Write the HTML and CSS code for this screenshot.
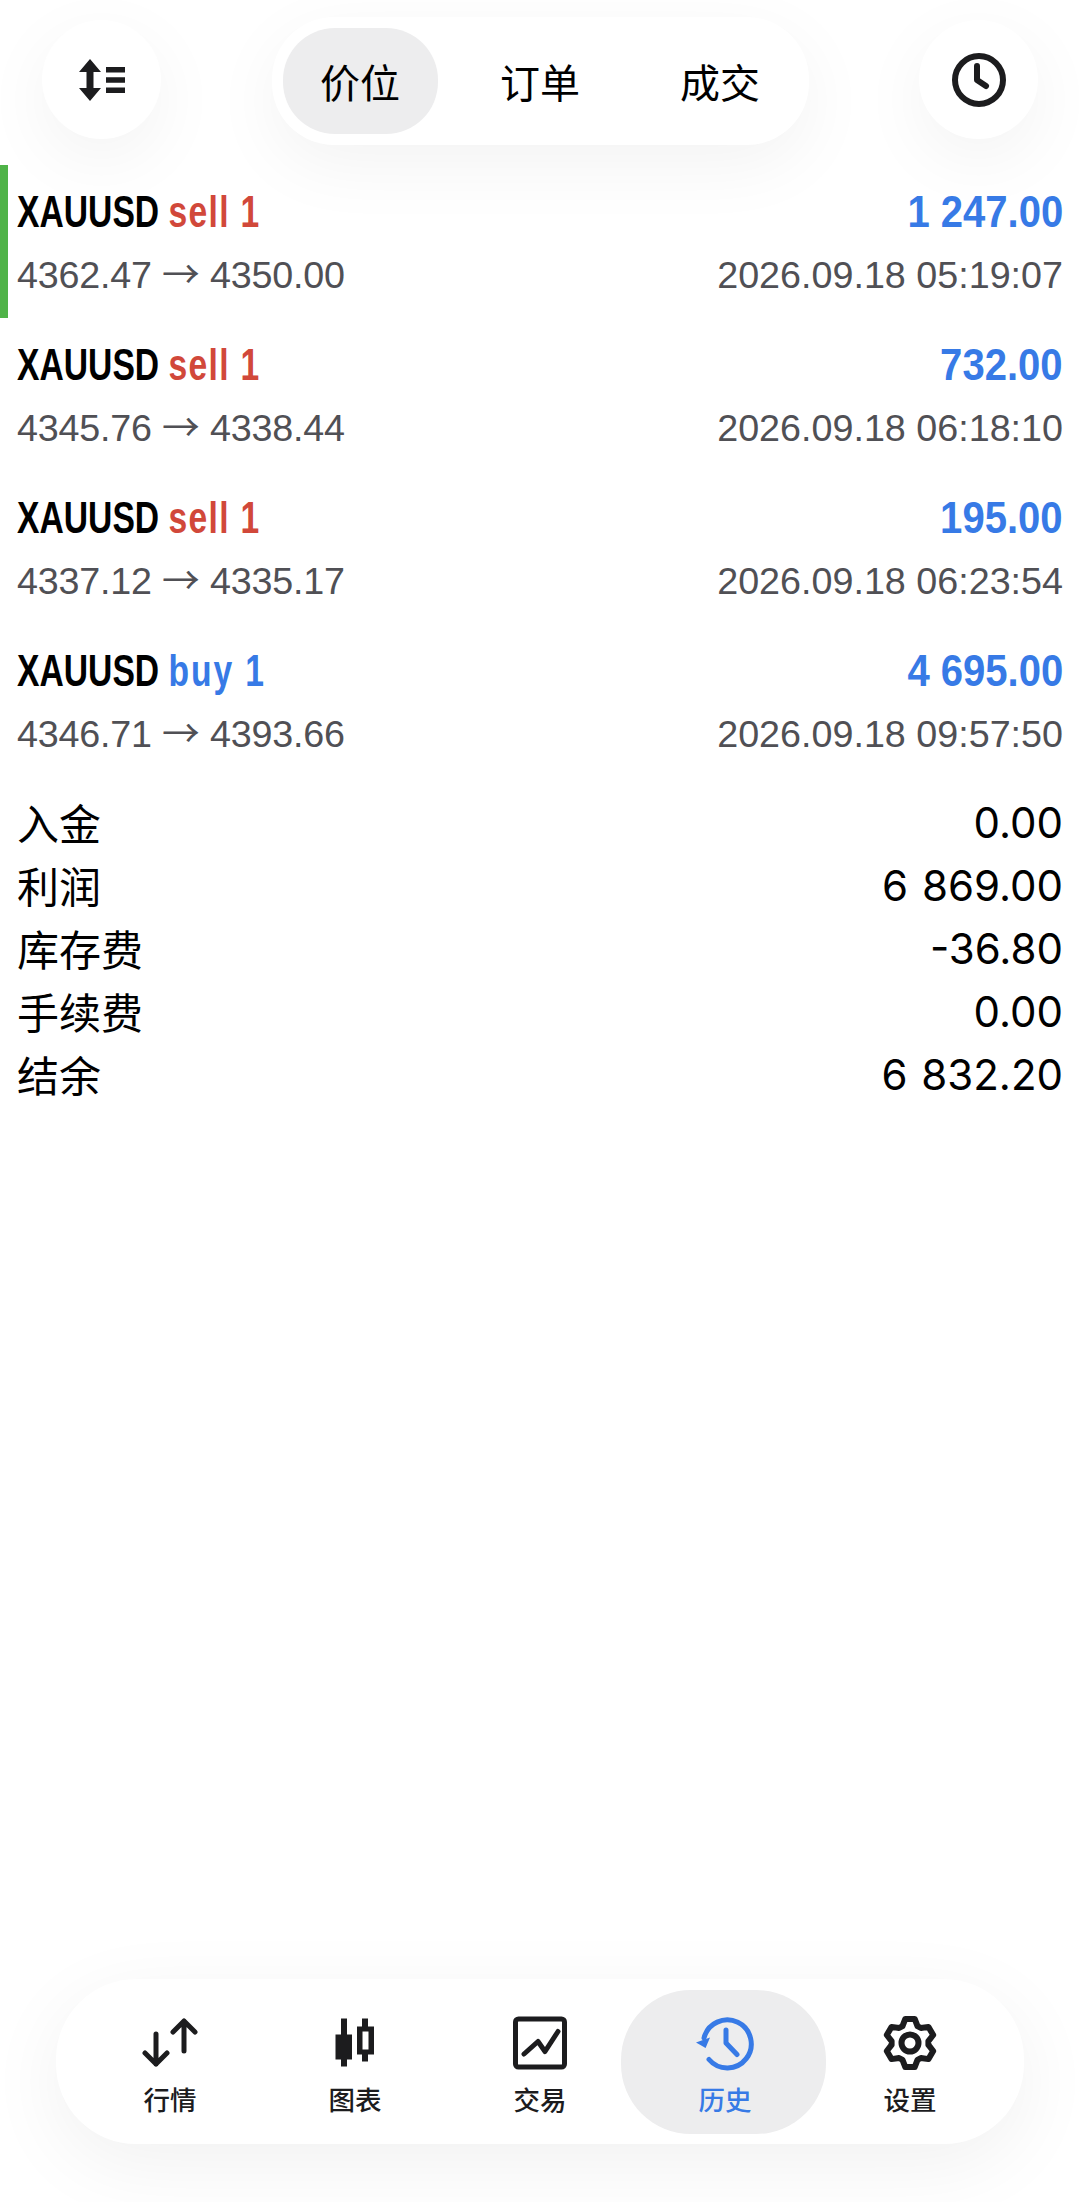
FILE: index.html
```html
<!DOCTYPE html>
<html lang="zh-CN">
<head>
    <meta charset="UTF-8">
    <meta name="viewport" content="width=device-width, initial-scale=1.0">
    <title>历史</title>
    <link rel="stylesheet" href="styles.css">
</head>
<body>
    <header class="top-bar">
        <button class="round-button">
            <svg class="sort-icon" viewBox="0 0 46 42">
                <path d="M11 0 22 13H14.5V29H22L11 42 0 29H7.5V13H0Z"/>
                <path d="M27 8H46V13.5H27ZM27 18.25H46V23.75H27ZM27 28.5H46V34H27Z"/>
            </svg>
        </button>
        <nav class="segments">
            <a class="segment active">价位</a>
            <a class="segment">订单</a>
            <a class="segment">成交</a>
        </nav>
        <button class="round-button">
            <svg class="clock-icon" viewBox="0 0 56 56">
                <circle cx="28" cy="28" r="24"/>
                <path d="M26 14V28L35 34"/>
            </svg>
        </button>
    </header>

    <main class="content">
        <section class="trades">
            <div class="trade current">
                <div class="trade-line title-line">
                    <span class="trade-name"><span>XAUUSD</span> <span class="side sell">sell 1</span></span>
                    <span class="amount">1 247.00</span>
                </div>
                <div class="trade-line sub-line">
                    <span class="prices">4362.47 <span class="arrow">→</span> 4350.00</span>
                    <span>2026.09.18 05:19:07</span>
                </div>
            </div>
            <div class="trade">
                <div class="trade-line title-line">
                    <span class="trade-name"><span>XAUUSD</span> <span class="side sell">sell 1</span></span>
                    <span class="amount">732.00</span>
                </div>
                <div class="trade-line sub-line">
                    <span class="prices">4345.76 <span class="arrow">→</span> 4338.44</span>
                    <span>2026.09.18 06:18:10</span>
                </div>
            </div>
            <div class="trade">
                <div class="trade-line title-line">
                    <span class="trade-name"><span>XAUUSD</span> <span class="side sell">sell 1</span></span>
                    <span class="amount">195.00</span>
                </div>
                <div class="trade-line sub-line">
                    <span class="prices">4337.12 <span class="arrow">→</span> 4335.17</span>
                    <span>2026.09.18 06:23:54</span>
                </div>
            </div>
            <div class="trade">
                <div class="trade-line title-line">
                    <span class="trade-name"><span>XAUUSD</span> <span class="side buy">buy 1</span></span>
                    <span class="amount">4 695.00</span>
                </div>
                <div class="trade-line sub-line">
                    <span class="prices">4346.71 <span class="arrow">→</span> 4393.66</span>
                    <span>2026.09.18 09:57:50</span>
                </div>
            </div>
        </section>

        <section class="summary">
            <div class="summary-row"><span class="summary-label">入金</span><span>0.00</span></div>
            <div class="summary-row"><span class="summary-label">利润</span><span>6 869.00</span></div>
            <div class="summary-row"><span class="summary-label">库存费</span><span>-36.80</span></div>
            <div class="summary-row"><span class="summary-label">手续费</span><span>0.00</span></div>
            <div class="summary-row"><span class="summary-label">结余</span><span>6 832.20</span></div>
        </section>
    </main>

    <nav class="tab-bar">
        <a class="tab">
            <svg class="tab-icon" viewBox="0 0 56 56">
                <path d="M14 19V49M3 38 14 49 25 38"/>
                <path d="M42 36V6M31 17 42 6 53 17"/>
            </svg>
            <span>行情</span>
        </a>
        <a class="tab">
            <svg class="tab-icon candles" viewBox="0 0 56 56">
                <path d="M14 3.5H20V19.5H25V44.5H20V51.5H14V44.5H8.5V19.5H14Z"/>
                <path d="M35 3.5H41V11.5H47V39.5H41V46.5H35V39.5H30V11.5H35ZM35.5 16.5V34.5H41.5V16.5Z" fill-rule="evenodd"/>
            </svg>
            <span>图表</span>
        </a>
        <a class="tab">
            <svg class="tab-icon" viewBox="0 0 56 56">
                <rect x="3.5" y="4" width="49" height="48" rx="3"/>
                <path d="M12 39 26 26.5 33 36.5 46 16.5"/>
            </svg>
            <span>交易</span>
        </a>
        <a class="tab active">
            <svg class="tab-icon history" viewBox="0 0 58 56">
                <path d="M13 44.5A24 24 0 1 0 8 23"/>
                <path class="solid" d="M0 27.5 14 22.5 9.6 33Z"/>
                <path d="M30 15V28L41 39.5"/>
            </svg>
            <span>历史</span>
        </a>
        <a class="tab">
            <svg class="tab-icon gear" viewBox="0 0 56 56">
                <path d="M20.5 11.1 23.3 3.9H32.7L35.5 11.1 38.9 13 46.5 11.9 51.2 20 46.4 26.1V29.9L51.2 36 46.5 44.1 38.9 43 35.5 44.9 32.7 52.1H23.3L20.5 44.9 17.1 43 9.5 44.1 4.8 36 9.6 29.9V26.1L4.8 20 9.5 11.9 17.1 13Z"/>
                <circle cx="28" cy="28" r="8.5"/>
            </svg>
            <span>设置</span>
        </a>
    </nav>
</body>
</html>
```

FILE: styles.css
```css
body {
    margin: 0;
    width: 1080px;
    height: 2202px;
    display: flex;
    flex-direction: column;
    background: #fff;
    color: #000;
    font-family: "Liberation Sans", "Noto Sans CJK SC", sans-serif;
    overflow: hidden;
}

.top-bar {
    display: flex;
    align-items: center;
    justify-content: space-between;
    height: 128px;
    margin-top: 17px;
    padding: 0 42px;
}

.round-button {
    width: 119px;
    height: 119px;
    margin-bottom: 3px;
    padding: 0;
    border: none;
    border-radius: 50%;
    background: #fff;
    display: flex;
    align-items: center;
    justify-content: center;
    box-shadow: 0 20px 70px rgba(0, 0, 0, 0.05);
}

.sort-icon {
    width: 46px;
    height: 42px;
    fill: #1c1c1e;
}

.clock-icon {
    width: 56px;
    height: 56px;
    fill: none;
    stroke: #1c1c1e;
    stroke-width: 6;
    stroke-linecap: round;
    stroke-linejoin: round;
}

.segments {
    display: flex;
    gap: 25px;
    padding: 11px;
    height: 106px;
    border-radius: 62px;
    background: #fff;
    box-shadow: 0 20px 70px rgba(0, 0, 0, 0.05);
}

.segment {
    width: 155px;
    display: flex;
    align-items: center;
    justify-content: center;
    border-radius: 52px;
    font-size: 40px;
    font-family: "Noto Sans CJK SC", sans-serif;
}

.segment.active {
    background: #ededee;
}

.content {
    flex: 1;
    margin-top: 20px;
}

.trade {
    height: 153px;
    box-sizing: border-box;
    padding: 18px 17px 0 9px;
    border-left: 8px solid transparent;
}

.trade.current {
    border-left-color: #4fb348;
}

.trade-line {
    display: flex;
    justify-content: space-between;
    align-items: center;
}

.title-line {
    height: 58px;
    font-weight: 700;
    font-size: 44px;
}

/* no condensed bold is installed, so squeeze the regular one */
.trade-name {
    display: inline-block;
    transform: scaleX(0.765);
    transform-origin: left center;
    white-space: nowrap;
}

.amount {
    display: inline-block;
    transform: scaleX(0.91);
    transform-origin: right center;
}

.sell {
    color: #d1483a;
    letter-spacing: 1.7px;
}

.buy {
    letter-spacing: 2.5px;
}

.buy,
.amount {
    color: #377ae6;
}

.sub-line {
    height: 68px;
    font-size: 37.7px;
    line-height: 44px;
    color: #505055;
}

.prices {
    letter-spacing: -0.2px;
}

.arrow {
    font-family: "Noto Sans CJK SC", sans-serif;
    line-height: 0;
}

.summary {
    margin-top: 14px;
    padding: 0 17px;
}

.summary-row {
    display: flex;
    justify-content: space-between;
    align-items: center;
    height: 63px;
    font-family: Inter, sans-serif;
    font-size: 42px;
    word-spacing: 2px;
}

.summary-label {
    font-family: "Noto Sans CJK SC", sans-serif;
    margin-top: -3px;
}

.tab-bar {
    display: grid;
    grid-template-columns: repeat(5, 185px);
    justify-content: center;
    align-items: center;
    height: 165px;
    margin: 0 56px 58px;
    border-radius: 80px;
    background: #fff;
    box-shadow: 0 20px 80px rgba(0, 0, 0, 0.06);
}

.tab {
    display: flex;
    flex-direction: column;
    align-items: center;
    justify-content: center;
    gap: 8px;
    height: 144px;
    box-sizing: border-box;
    padding-top: 10px;
    font-family: "Noto Sans CJK SC", sans-serif;
    font-size: 26.5px;
    font-weight: 500;
    color: #1c1c1e;
}

.tab.active {
    margin: 0 -8px 0 -12px;
    padding-left: 4px;
    border-radius: 70px;
    background: #ededee;
    color: #377ae6;
}

.tab-icon {
    width: 56px;
    height: 56px;
    fill: none;
    stroke: currentColor;
    stroke-width: 5;
    stroke-linecap: round;
    stroke-linejoin: round;
}

.tab-icon .solid {
    fill: currentColor;
    stroke: none;
}

.tab-icon.candles {
    fill: currentColor;
    stroke: none;
}

.tab-icon.history {
    width: 58px;
}

.tab-icon.gear {
    stroke-width: 6;
}
```
